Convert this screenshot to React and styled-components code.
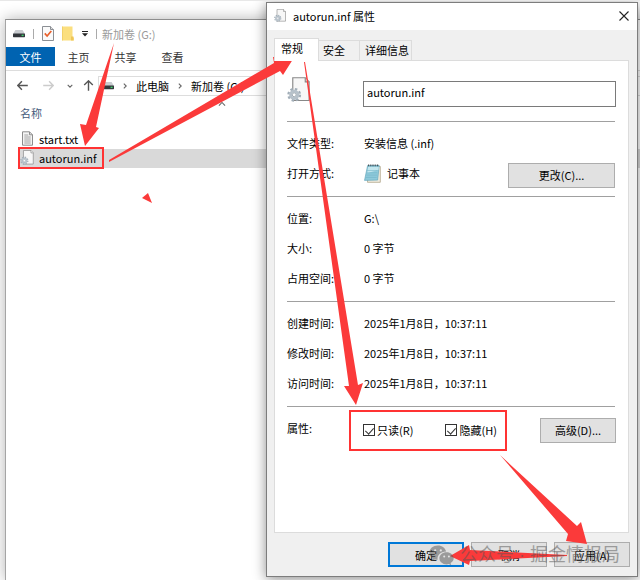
import { useState } from "react";
import styled, { createGlobalStyle } from "styled-components";

const FILES = [
    { name: "start.txt", kind: "txt" },
    { name: "autorun.inf", kind: "inf" },
];

const DATES = [
    { label: "创建时间:", value: "2025年1月8日，10:37:11" },
    { label: "修改时间:", value: "2025年1月8日，10:37:11" },
    { label: "访问时间:", value: "2025年1月8日，10:37:11" },
];

const App = () => {
    return (
        <Desktop>
            <GlobalStyle />
            <Explorer />
            <Properties />
            <Arrows />
            <Watermark>
                <WechatIcon />
                <span>公众号 · 掘金情报局</span>
            </Watermark>
        </Desktop>
    );
}

export default App;

const Explorer = () => {
    const [selected, setSelected] = useState("autorun.inf");

    return (
        <ExplorerWindow>
            <QuickBar>
                <DriveIcon />
                <Divider />
                <CheckDocIcon />
                <FolderIcon />
                <MenuArrowIcon />
                <Divider />
                <WindowTitle>新加卷 (G:)</WindowTitle>
            </QuickBar>
            <Ribbon>
                <RibbonTab $active>文件</RibbonTab>
                <RibbonTab>主页</RibbonTab>
                <RibbonTab>共享</RibbonTab>
                <RibbonTab>查看</RibbonTab>
            </Ribbon>
            <NavRow>
                <NavButton aria-label="后退"><ArrowIcon color="#555" /></NavButton>
                <NavButton aria-label="前进"><ArrowIcon color="#ccc" turn={180} /></NavButton>
                <NavButton aria-label="历史" $narrow><ChevronIcon turn={90} /></NavButton>
                <NavButton aria-label="向上" $narrow><ArrowIcon color="#555" turn={90} /></NavButton>
                <AddressBar>
                    <DriveIcon />
                    <ChevronIcon />
                    <span>此电脑</span>
                    <ChevronIcon />
                    <span>新加卷 (G:)</span>
                </AddressBar>
            </NavRow>
            <ListHeader>
                <span>名称</span>
                <SortMark><ChevronIcon turn={270} wide /></SortMark>
            </ListHeader>
            <FileList>
                {FILES.map((file) => (
                    <li key={file.name}>
                        <FileRow
                            $selected={selected === file.name}
                            onClick={() => setSelected(file.name)}
                        >
                            {file.kind === "txt" ? <TextFileIcon /> : <GearFileIcon size={15} />}
                            {file.name}
                            {file.kind === "inf" && <FileMark />}
                        </FileRow>
                    </li>
                ))}
            </FileList>
        </ExplorerWindow>
    );
}

const Properties = () => {
    const [name, setName] = useState("autorun.inf");
    const [readOnly, setReadOnly] = useState(true);
    const [hidden, setHidden] = useState(true);

    return (
        <Dialog role="dialog" aria-label="autorun.inf 属性">
            <TitleBar>
                <GearFileIcon size={13} />
                <DialogTitle>autorun.inf 属性</DialogTitle>
                <CloseButton aria-label="关闭">
                    <svg width="10" height="10" viewBox="0 0 10 10">
                        <path d="M.5 .5l9 9M9.5 .5l-9 9" stroke="#222" strokeWidth="1.1" />
                    </svg>
                </CloseButton>
            </TitleBar>
            <DialogBody>
                <TabList>
                    <Tab $active>常规</Tab>
                    <Tab>安全</Tab>
                    <Tab>详细信息</Tab>
                </TabList>
                <Panel>
                    <NameRow>
                        <Label as="div"><GearFileIcon size={25} /></Label>
                        <NameInput
                            aria-label="文件名"
                            value={name}
                            onChange={(e) => setName(e.target.value)}
                        />
                    </NameRow>
                    <Section>
                        <Row>
                            <Label>文件类型:</Label>
                            <Value>安装信息 (.inf)</Value>
                        </Row>
                        <Row>
                            <Label>打开方式:</Label>
                            <Value><NotepadIcon />记事本</Value>
                            <ChangeButton>更改(C)...</ChangeButton>
                        </Row>
                    </Section>
                    <Section>
                        <Row>
                            <Label>位置:</Label>
                            <Value>G:\</Value>
                        </Row>
                        <Row>
                            <Label>大小:</Label>
                            <Value>0 字节</Value>
                        </Row>
                        <Row>
                            <Label>占用空间:</Label>
                            <Value>0 字节</Value>
                        </Row>
                    </Section>
                    <Section>
                        {DATES.map((date) => (
                            <Row key={date.label}>
                                <Label>{date.label}</Label>
                                <Value>{date.value}</Value>
                            </Row>
                        ))}
                    </Section>
                    <Section>
                        <AttributeRow>
                            <AttributeLabel>属性:</AttributeLabel>
                            <Checks>
                                <CheckLabel>
                                    <CheckBox
                                        type="checkbox"
                                        checked={readOnly}
                                        onChange={(e) => setReadOnly(e.target.checked)}
                                    />
                                    只读(R)
                                </CheckLabel>
                                <CheckLabel>
                                    <CheckBox
                                        type="checkbox"
                                        checked={hidden}
                                        onChange={(e) => setHidden(e.target.checked)}
                                    />
                                    隐藏(H)
                                </CheckLabel>
                                <CheckMark />
                            </Checks>
                            <AdvancedButton>高级(D)...</AdvancedButton>
                        </AttributeRow>
                    </Section>
                </Panel>
                <Footer>
                    <Button $primary>确定</Button>
                    <Button>取消</Button>
                    <Button>应用(A)</Button>
                </Footer>
            </DialogBody>
        </Dialog>
    );
}

const Arrows = () => (
    <ArrowLayer viewBox="0 0 640 580" preserveAspectRatio="none" aria-hidden="true">
        <polygon points="114,43 96,127 99,128 85,146 80,124 86,125" />
        <polygon points="109,160 274,63 273,57 295,56 283,75 280,71 109,162" />
        <polygon points="304,62 305,62 358,385 363,383 356,405 344,386 349,386" />
        <polygon points="500,455 577,526 581,522 587,544 566,541 568,534" />
        <polygon points="567,555 470,550 469,545 450,556 469,565 470,561 567,556" />
        <polygon points="148,193 142,198 152,203" />
    </ArrowLayer>
);

const DriveIcon = () => (
    <svg width="12" height="9" viewBox="0 0 12 9">
        <path d="M2.4 1h7.2L12 5H0z" fill="#c9ccd0" />
        <rect y="4.6" width="12" height="3.6" rx=".6" fill="#33373c" />
        <rect x="8.6" y="5.7" width="2" height="1.4" fill="#3fd06a" />
    </svg>
);

const CheckDocIcon = () => (
    <svg width="12" height="15" viewBox="0 0 12 15">
        <path d="M.5 .5h8l3 3v11H.5z" fill="#fafafa" stroke="#8b8f94" />
        <path d="M8.5 .5v3h3" fill="#ddd" stroke="#8b8f94" />
        <path d="M2.8 7.4l2.3 2.6 4.2-5" fill="none" stroke="#e8602c" strokeWidth="1.7" />
    </svg>
);

const FolderIcon = () => (
    <svg width="12" height="15" viewBox="0 0 12 15">
        <path d="M0 .5h10.5v10L12 12v2.5H0z" fill="#fbdf7f" />
        <path d="M9 10.5h2.5v4H9z" fill="#eec65a" />
        <path d="M.4 .5v14" stroke="#efcb62" strokeWidth=".8" />
    </svg>
);

const MenuArrowIcon = () => (
    <svg width="6" height="6" viewBox="0 0 6 6">
        <path d="M0 .5h6" stroke="#222" />
        <path d="M0 2.2h6L3 5.6z" fill="#222" />
    </svg>
);

const ArrowIcon = ({ color, turn = 0 }) => (
    <svg width="11" height="11" viewBox="0 0 11 11">
        <g transform={`rotate(${turn} 5.5 5.5)`} fill="none" stroke={color} strokeWidth="1.4">
            <path d="M.8 5.5h10M4.9 1.2L.8 5.5l4.1 4.3" />
        </g>
    </svg>
);

const ChevronIcon = ({ turn = 0, wide }) => (
    <svg width={wide ? 8 : 6} height={wide ? 8 : 6} viewBox="0 0 6 6">
        <path
            d="M1.8 .7l2.4 2.3-2.4 2.3"
            transform={`rotate(${turn} 3 3)`}
            fill="none"
            stroke="#666"
            strokeWidth={wide ? 0.8 : 1.1}
        />
    </svg>
);

const TextFileIcon = () => (
    <svg width="15" height="15" viewBox="0 0 15 15">
        <path d="M2.5 .8h7l3 3v10.4h-10z" fill="#f4f4f4" stroke="#8d8d8d" />
        <path d="M9.5 .8v3h3" fill="none" stroke="#8d8d8d" />
        <path d="M4.3 4h4M4.3 6h6.4M4.3 8h6.4M4.3 10h6.4M4.3 12h6.4" stroke="#9a9a9a" strokeWidth=".9" />
    </svg>
);

const GearFileIcon = ({ size }) => (
    <svg width={size} height={size} viewBox="0 0 26 26">
        <path d="M6 .8h13l4 4.2v19.4H6z" fill="#f7f7f7" stroke="#888" strokeWidth="1.2" />
        <path d="M19 .8v4.2h4" fill="#fff" stroke="#888" strokeWidth="1.2" />
        <circle cx="7.5" cy="18.5" r="6" fill="none" stroke="#a1adb7" strokeWidth="2.4" strokeDasharray="2.5 2.21" />
        <circle cx="7.5" cy="18.5" r="3.9" fill="#eef2f5" stroke="#b6c1ca" strokeWidth="2.8" />
        <circle cx="7.5" cy="18.5" r="2" fill="#fff" stroke="#8996a1" strokeWidth=".8" />
    </svg>
);

const NotepadIcon = () => (
    <svg width="17" height="19" viewBox="0 0 17 19">
        <path d="M4 2.5h12.3v15.8H3.5z" fill="#f1ede0" stroke="#b0a68c" strokeWidth=".8" />
        <path d="M3.6 1.5h11.6l-1.5 14.6L.5 16.4z" fill="#8fcadb" stroke="#5a9fb5" strokeWidth=".6" />
        <path d="M4 3h10.8l-.4 3L3.4 9z" fill="#c3e6ee" />
        <path d="M3.2 6.5h10.4M2.8 8.8h10.5M2.4 11.1h10.6M1.9 13.4h10.8" stroke="#69afc3" strokeWidth=".5" />
        <path d="M4 1.3h11" stroke="#48545a" strokeWidth="1.8" strokeDasharray="1 .8" />
    </svg>
);

const WechatIcon = () => (
    <svg width="25" height="21" viewBox="0 0 25 21">
        <path d="M9 .5C4 .5 .3 3.7 .3 7.7c0 2.3 1.3 4.3 3.3 5.6l-.8 2.7 3.1-1.6c1 .3 1.7 .4 2.7 .4-.6-4.3 2.9-8.2 8.5-8.2C16.4 3 13 .5 9 .5z" />
        <path d="M24.7 13.3c0-3.4-3.3-6.1-7.2-6.1s-7.1 2.7-7.1 6.1c0 3.4 3.2 6.1 7.1 6.1 .8 0 1.6-.1 2.4-.4l2.3 1.3-.6-2.2c1.9-1.1 3.1-2.8 3.1-4.8z" />
        <g fill="#e6e6e6">
            <circle cx="6.2" cy="5.4" r="1.1" />
            <circle cx="11.8" cy="5.4" r="1.1" />
            <circle cx="15.2" cy="11.5" r="1" />
            <circle cx="19.9" cy="11.5" r="1" />
        </g>
    </svg>
);

const GlobalStyle = createGlobalStyle`
    * {
        box-sizing: border-box;
    }
    body {
        margin: 0;
        background: #fff;
    }
    body, button, input {
        font-family: "Noto Sans CJK SC", sans-serif;
        font-size: 11px;
        color: #000;
    }
    svg {
        display: block;
        flex: none;
    }
    button {
        cursor: pointer;
    }
`

const Desktop = styled.main`
    position: relative;
    min-height: 100vh;
    overflow: hidden;
    background: #fff;
    border-top: 1px solid #e8e8e8;
`

const ExplorerWindow = styled.section`
    position: absolute;
    top: 18px;
    left: 5px;
    right: 0;
    bottom: 0;
    background: #fff;
    border-top: 1px solid #8e8e8e;
    border-left: 1px solid #a5a5a5;
    box-shadow: 0 0 14px rgba(0, 0, 0, 0.3);
`

const QuickBar = styled.div`
    display: flex;
    align-items: center;
    gap: 8px;
    height: 27px;
    padding-left: 7px;
`

const Divider = styled.span`
    width: 1px;
    height: 10px;
    background: #aaa;
`

const WindowTitle = styled.span`
    color: #999;
    margin-left: -3px;
`

const Ribbon = styled.nav`
    display: flex;
    height: 24px;
    padding-bottom: 4px;
    border-bottom: 1px solid #ddd;
`

const RibbonTab = styled.button`
    width: ${(props) => (props.$active ? "49px" : "47px")};
    padding: 0;
    border: none;
    background: ${(props) => (props.$active ? "#0063b1" : "#fff")};
    color: ${(props) => (props.$active ? "#fff" : "#333")};
`

const NavRow = styled.div`
    display: flex;
    align-items: center;
    height: 25px;
    padding-left: 3px;
    padding-top: 4px;
`

const NavButton = styled.button`
    display: flex;
    justify-content: center;
    width: ${(props) => (props.$narrow ? "18px" : "26px")};
    padding: 0;
    border: none;
    background: none;
`

const AddressBar = styled.div`
    flex: 1;
    display: flex;
    align-items: center;
    gap: 8px;
    height: 20px;
    margin-left: 1px;
    padding-left: 3px;
    border: 1px solid #ddd;
    border-right: none;
`

const ListHeader = styled.div`
    position: relative;
    display: flex;
    align-items: center;
    height: 34px;
    padding-left: 14px;
    color: #44597a;
`

const SortMark = styled.span`
    position: absolute;
    top: 4px;
    left: 212px;
`

const FileList = styled.ul`
    margin: 0;
    padding: 0 0 0 12px;
    list-style: none;
`

const FileRow = styled.button`
    position: relative;
    display: flex;
    align-items: center;
    gap: 4px;
    width: 100%;
    height: 19px;
    padding: 0 0 2px 2px;
    border: none;
    background: ${(props) => (props.$selected ? "#d9d9d9" : "#fff")};
`

const FileMark = styled.span`
    position: absolute;
    top: -2px;
    left: 0;
    width: 86px;
    height: 22px;
    border: 2px solid #f33;
`

const Dialog = styled.section`
    position: absolute;
    top: 1px;
    left: 266px;
    right: 2px;
    bottom: 3px;
    display: flex;
    flex-direction: column;
    background: #f0f0f0;
    border: 1px solid #7d7d7d;
    box-shadow: 0 2px 12px rgba(0, 0, 0, 0.45);
`

const TitleBar = styled.header`
    display: flex;
    align-items: center;
    gap: 6px;
    height: 27px;
    padding: 0 8px 2px 7px;
    background: #fff;
`

const DialogTitle = styled.h1`
    flex: 1;
    margin: 0;
    font-size: 11px;
    font-weight: 400;
`

const CloseButton = styled.button`
    padding: 0;
    border: none;
    background: none;
`

const DialogBody = styled.div`
    flex: 1;
    display: flex;
    flex-direction: column;
    padding: 8px 8px 9px 7px;
`

const TabList = styled.nav`
    display: flex;
    align-items: flex-end;
    height: 22px;
`

const Tab = styled.button`
    position: relative;
    z-index: ${(props) => (props.$active ? 1 : 0)};
    height: ${(props) => (props.$active ? "23px" : "20px")};
    margin-bottom: ${(props) => (props.$active ? "-1px" : "0")};
    padding: ${(props) => (props.$active ? "0 15px 4px 6px" : "0 14px 2px 4px")};
    border: 1px solid #dcdcdc;
    border-bottom: none;
    background: ${(props) => (props.$active ? "#fff" : "#f0f0f0")};

    & + & {
        border-left: none;
    }

    &:last-child {
        padding: 0 2px 2px 5px;
    }
`

const Panel = styled.div`
    flex: 1;
    padding: 0 13px 0 12px;
    background: #fff;
    border: 1px solid #dcdcdc;
`

const NameRow = styled.div`
    display: flex;
    align-items: center;
    height: 60px;
    padding-bottom: 4px;
`

const NameInput = styled.input`
    flex: 1;
    min-width: 0;
    height: 26px;
    margin: 10px -1px 0;
    padding: 0 3px 4px;
    border: 1px solid #7a7a7a;
    border-radius: 0;
`

const Section = styled.div`
    padding: 6px 0 8px;
    border-top: 1px solid #a0a0a0;
`

const Row = styled.div`
    display: flex;
    align-items: center;
    height: 30px;
`

const AttributeRow = styled(Row)`
    height: 34px;
`

const Label = styled.span`
    flex: none;
    width: 77px;
`

const AttributeLabel = styled(Label)`
    padding-bottom: 4px;
`

const Value = styled.span`
    flex: 1;
    display: flex;
    align-items: center;
    gap: 6px;
`

const Button = styled.button`
    width: 76px;
    height: 25px;
    padding: 0;
    background: #e1e1e1;
    border: ${(props) => (props.$primary ? "2px solid #0078d7" : "1px solid #adadad")};
`

const ChangeButton = styled(Button)`
    width: 107px;
    margin-top: 4px;
`

const AdvancedButton = styled(Button)`
    margin-left: auto;
    margin-right: -1px;
`

const Checks = styled.div`
    position: relative;
    display: flex;
    gap: 32px;
    margin-left: -1px;
`

const CheckMark = styled.span`
    position: absolute;
    top: -12px;
    left: -14px;
    right: -10px;
    bottom: -13px;
    border: 2px solid #f33;
    pointer-events: none;
`

const CheckLabel = styled.label`
    display: flex;
    align-items: center;
    gap: 2px;
`

const CheckBox = styled.input`
    appearance: none;
    position: relative;
    width: 12px;
    height: 12px;
    margin: 0;
    border: 1px solid #333;
    background: #fff;

    &:checked::after {
        content: "";
        position: absolute;
        top: 1px;
        left: 3px;
        width: 4px;
        height: 7px;
        border: solid #333;
        border-width: 0 1px 1px 0;
        transform: rotate(42deg);
    }
`

const Footer = styled.footer`
    display: flex;
    justify-content: flex-end;
    gap: 7px;
    padding-top: 9px;
    margin-right: -1px;
`

const ArrowLayer = styled.svg`
    position: absolute;
    top: -1px;
    left: 0;
    width: 100%;
    height: calc(100% + 1px);
    fill: #fb3a3a;
    pointer-events: none;
`

const Watermark = styled.div`
    position: absolute;
    right: 20px;
    bottom: 12px;
    display: flex;
    align-items: center;
    gap: 6px;
    color: #555;
    font-family: "Liberation Sans", "Noto Sans CJK SC", sans-serif;
    font-size: 18px;
    line-height: 26px;
    opacity: 0.5;
    pointer-events: none;

    svg {
        fill: #555;
    }
`
